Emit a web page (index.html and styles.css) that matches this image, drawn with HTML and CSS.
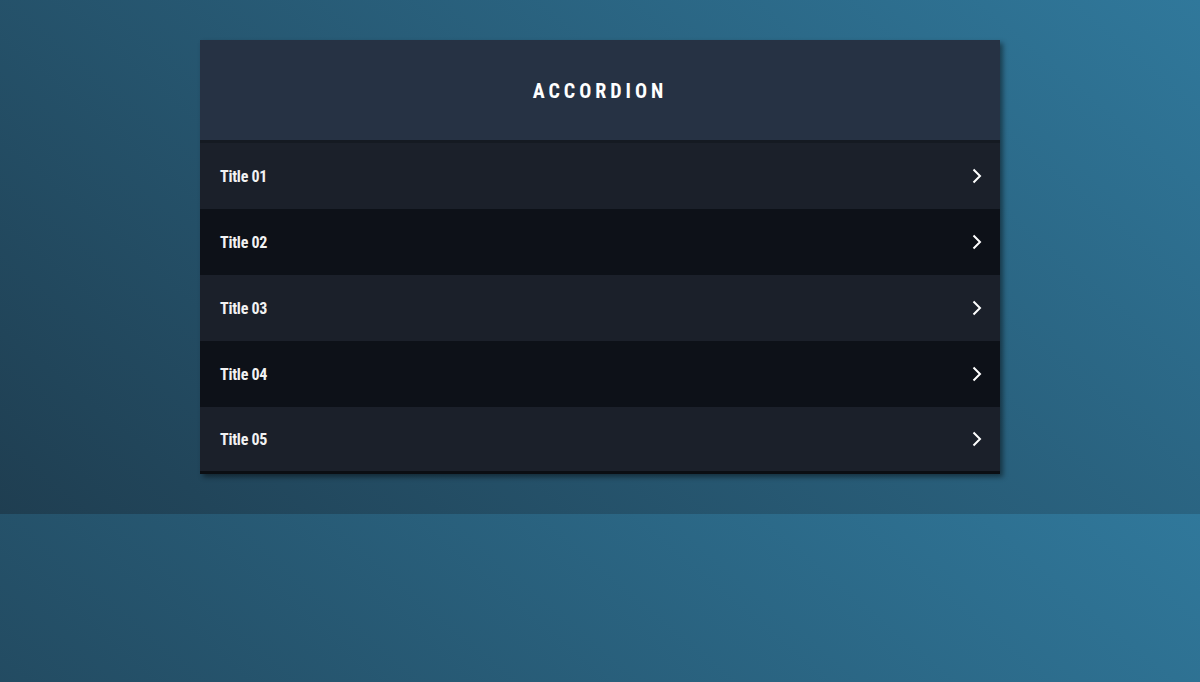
FILE: index.html
```html
<!DOCTYPE html>
<html lang="en">
<head>
<meta charset="utf-8">
<title>Accordion</title>
<link rel="stylesheet" href="styles.css">
</head>
<body>
  <section class="accordion">
    <header class="accordion-head">
      <h1 class="accordion-title">Accordion</h1>
    </header>
    <ul class="accordion-list">
      <li class="accordion-item">
        <span class="item-label">Title 01</span>
        <svg class="chevron" viewBox="0 0 10 16" width="10" height="16"><path d="M1.5 1.5 L8 8 L1.5 14.5" /></svg>
      </li>
      <li class="accordion-item">
        <span class="item-label">Title 02</span>
        <svg class="chevron" viewBox="0 0 10 16" width="10" height="16"><path d="M1.5 1.5 L8 8 L1.5 14.5" /></svg>
      </li>
      <li class="accordion-item">
        <span class="item-label">Title 03</span>
        <svg class="chevron" viewBox="0 0 10 16" width="10" height="16"><path d="M1.5 1.5 L8 8 L1.5 14.5" /></svg>
      </li>
      <li class="accordion-item">
        <span class="item-label">Title 04</span>
        <svg class="chevron" viewBox="0 0 10 16" width="10" height="16"><path d="M1.5 1.5 L8 8 L1.5 14.5" /></svg>
      </li>
      <li class="accordion-item">
        <span class="item-label">Title 05</span>
        <svg class="chevron" viewBox="0 0 10 16" width="10" height="16"><path d="M1.5 1.5 L8 8 L1.5 14.5" /></svg>
      </li>
    </ul>
  </section>
</body>
</html>
```

FILE: styles.css
```css
html {
  margin: 0;
}

body {
  margin: 0;
  padding: 40px 0;
  background: linear-gradient(40deg, #1f3e51 0%, #30789b 100%);
  font-family: "Roboto Condensed", "Liberation Sans Narrow", Roboto, "Liberation Sans", sans-serif;
  font-stretch: condensed;
  color: #ffffff;
}

.accordion {
  width: 800px;
  margin: 0 auto;
  background: #1b202a;
  box-shadow: 3px 3px 5px rgba(0, 0, 0, 0.45);
  border-bottom: 3px solid #0b0e13;
}

.accordion-head {
  height: 100px;
  display: flex;
  align-items: center;
  justify-content: center;
  background: #263244;
  border-bottom: 3px solid #151a22;
}

.accordion-title {
  margin: 2px 0 0;
  font-family: Roboto, "Liberation Sans", sans-serif;
  font-size: 20px;
  font-weight: 700;
  letter-spacing: 4px;
  text-transform: uppercase;
  color: #ffffff;
}

.accordion-list {
  list-style: none;
  margin: 0;
  padding: 0;
}

.accordion-item {
  height: 66px;
  display: flex;
  align-items: center;
  justify-content: space-between;
  padding: 0 18px 0 20px;
  background: #1b202a;
}

.accordion-item:nth-child(even) {
  background: #0d1118;
}

.accordion-item:last-child {
  height: 64px;
}

.item-label {
  font-size: 16px;
  font-weight: 700;
  letter-spacing: -0.25px;
  color: #f2f2f2;
}

.chevron {
  fill: none;
  stroke: #ffffff;
  stroke-width: 2;
}
```
